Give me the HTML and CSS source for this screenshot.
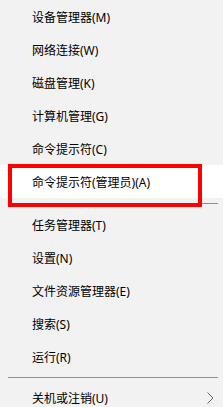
FILE: index.html
```html
<!DOCTYPE html>
<html>
<head>
    <meta charset="UTF-8">
    <title>Win+X 菜单</title>
    <link rel="stylesheet" href="styles.css">
</head>
<body>
    <ul class="menu">
        <li class="menu-item">设备管理器(M)</li>
        <li class="menu-item">网络连接(W)</li>
        <li class="menu-item">磁盘管理(K)</li>
        <li class="menu-item">计算机管理(G)</li>
        <li class="menu-item">命令提示符(C)</li>
        <li class="menu-item active">命令提示符(管理员)(A)<span class="mark"></span></li>
        <li class="separator"></li>
        <li class="menu-item">任务管理器(T)</li>
        <li class="menu-item">设置(N)</li>
        <li class="menu-item">文件资源管理器(E)</li>
        <li class="menu-item">搜索(S)</li>
        <li class="menu-item">运行(R)</li>
        <li class="separator last"></li>
        <li class="menu-item">关机或注销(U)
            <svg class="arrow" width="7" height="12" viewBox="0 0 7 12">
                <polyline points="0.5,0.5 6,6 0.5,11.5" fill="none" stroke="#666" stroke-width="1"/>
            </svg>
        </li>
    </ul>
</body>
</html>
```

FILE: styles.css
```css
* {
    margin: 0;
    padding: 0;
    box-sizing: border-box;
}

html, body {
    width: 223px;
    height: 407px;
    overflow: hidden;
}

body {
    font-family: "Noto Sans", "Noto Sans CJK SC", sans-serif;
    font-size: 12px;
    color: #000;
    background-color: #f2f2f2;
}

.menu {
    list-style: none;
}

.menu-item {
    position: relative;
    height: 33px;
    padding-left: 32px;
    display: flex;
    align-items: center;
}

.menu-item.active {
    background-color: #fff;
}

/* 红框标注 */
.mark {
    position: absolute;
    top: -1px;
    left: 8px;
    width: 194px;
    height: 43px;
    border: 4px solid #f00;
    z-index: 2;
}

.separator {
    height: 1px;
    margin: 5px 5px 4px 8px;
    background-color: #8f8f8f;
}

.separator.last {
    margin-top: 4px;
    margin-bottom: 3px;
}

.arrow {
    margin-left: auto;
    margin-right: 9px;
}
```
